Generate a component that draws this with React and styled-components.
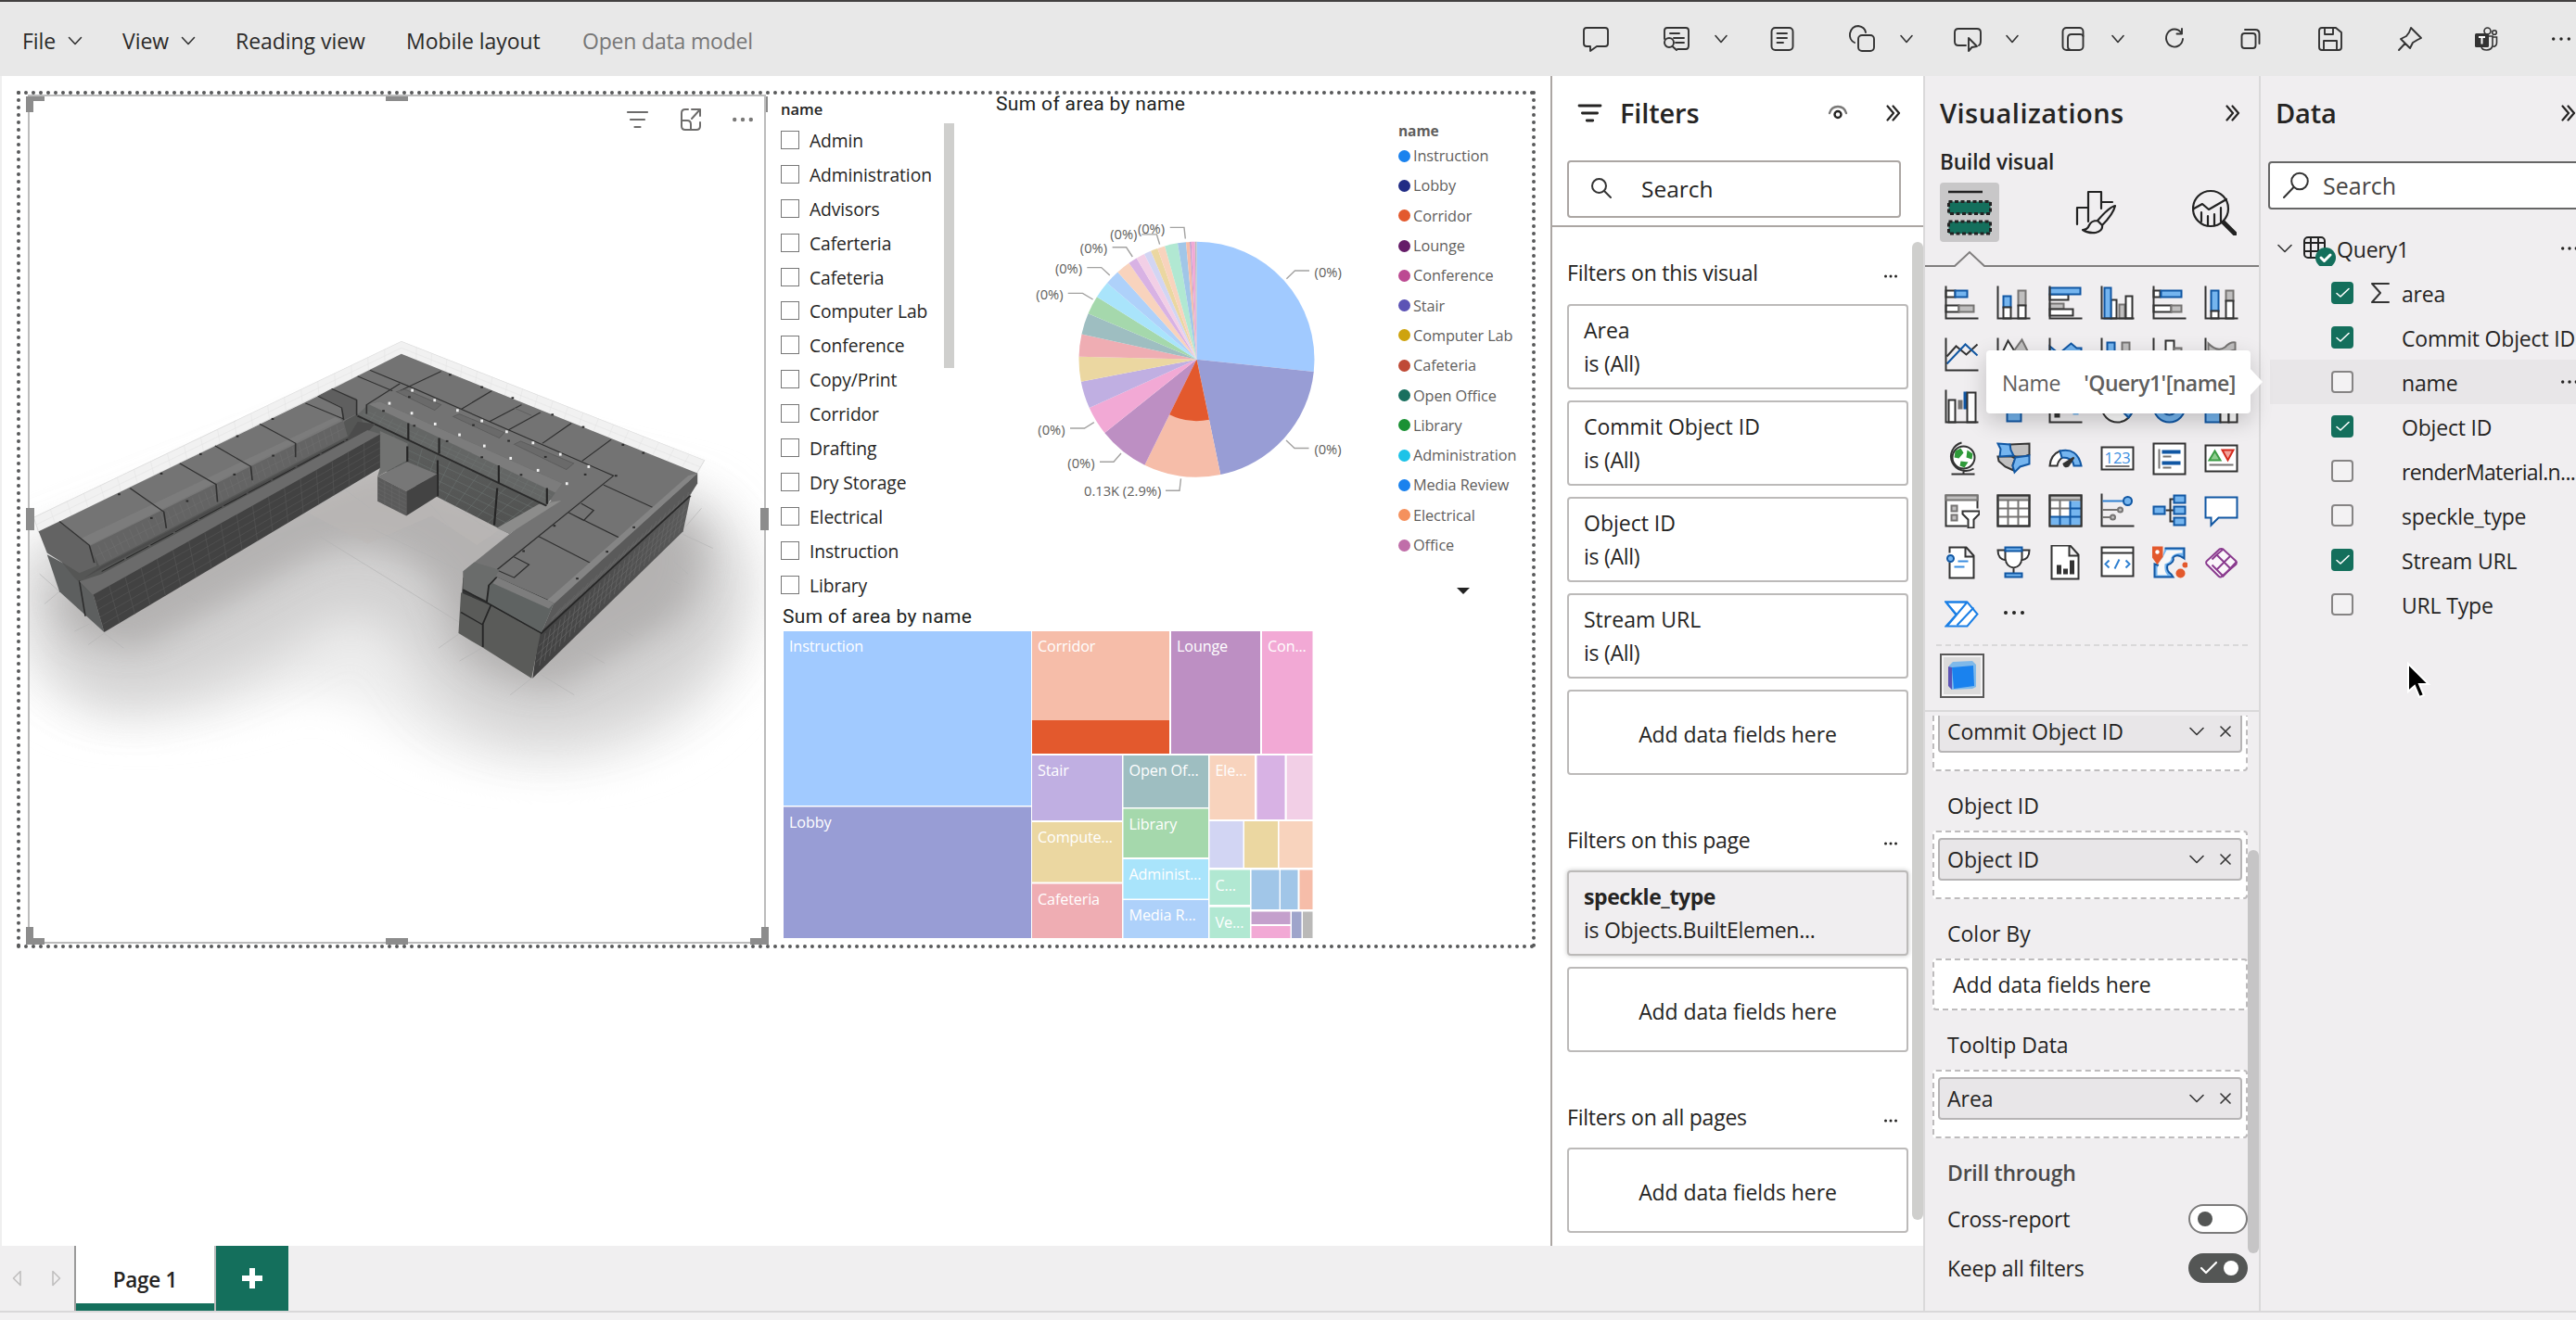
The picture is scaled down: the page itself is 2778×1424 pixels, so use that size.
import React from "react";
import styled, { createGlobalStyle, css } from "styled-components";

const FONT = `"Open Sans", "Noto Sans", sans-serif`;
const GREEN = "#146f5c";
const BLUE = "#75b5ef";
const NAVY = "#1157a3";
const GREY = "#c0bfbf";
const MID = "#767473";
const INK = "#333";

const Global = createGlobalStyle`
  * { box-sizing: border-box; }
  html, body { margin: 0; padding: 0; overflow: hidden; }
  body { background: #f0eff0; font-family: ${FONT}; font-size: 23px; color: #252423; }
  svg { display: block; flex: none; }
`;

/* ---------- shell ---------- */

const Shell = styled.div`
  position: relative;
  width: 2778px;
  height: 1424px;
  display: flex;
  flex-direction: column;
  overflow: hidden;
  border-top: 2px solid #434141;
`;
const Toolbar = styled.header`
  height: 80px;
  flex: none;
  display: flex;
  align-items: center;
  background: #e8e8e8;
  padding-left: 24px;
`;
const Menu = styled.nav`
  display: flex;
  align-items: center;
`;
const MenuItem = styled.div`
  width: ${(p) => p.$w}px;
  display: flex;
  align-items: center;
  gap: 13px;
  white-space: nowrap;
  color: ${(p) => (p.$muted ? "#777" : "#2b2a29")};
  letter-spacing: ${(p) => (p.$muted ? "-0.008em" : "-0.002em")};
  padding-top: 3px;
`;
const Tools = styled.div`
  margin-left: auto;
  display: flex;
  align-items: center;
`;
const Tool = styled.span`
  display: flex;
  justify-content: center;
  width: ${(p) => p.$w || 32}px;
  margin-left: ${(p) => p.$gap}px;
`;
const Body = styled.div`
  display: flex;
  height: 1332px;
  flex: none;
`;
const StatusEdge = styled.footer`
  height: 10px;
  border-top: 2px solid #d9d8d9;
  background: #f2f1f2;
`;
const Left = styled.div`
  width: 2074px;
  display: flex;
  flex-direction: column;
`;
const Stage = styled.div`
  height: 1262px;
  display: flex;
`;
const CanvasArea = styled.main`
  width: 1672px;
  background: #fff;
  border-left: 2px solid #efefef;
  padding: 16px 0 0 16px;
`;

/* ---------- report canvas ---------- */

const Report = styled.div`
  width: 1638px;
  height: 925px;
  border: 4px dotted #58595a;
  display: flex;
  padding-left: 8px;
`;
const ModelVisual = styled.section`
  position: relative;
  width: 796px;
  height: 916px;
  border: 2px solid #bcbcbc;
  padding-top: 236px;
`;
const VisualHeader = styled.div`
  position: absolute;
  top: 11px;
  right: 12px;
  display: flex;
  align-items: center;
  gap: 33px;
  height: 28px;
`;
const Handle = styled.i`
  position: absolute;
  background: #8c8c8c;
  width: ${(p) => p.$w}px;
  height: ${(p) => p.$h}px;
  left: ${(p) => p.$x}px;
  top: ${(p) => p.$y}px;
`;
const Charts = styled.div`
  flex: 1;
  display: flex;
  flex-direction: column;
`;
const ChartsTop = styled.div`
  height: 548px;
  display: flex;
`;
const Slicer = styled.section`
  width: 220px;
  padding-left: 16px;
`;
const SlicerTitle = styled.div`
  height: 31px;
  line-height: 32px;
  font-size: 16.5px;
  font-weight: 600;
`;
const SlicerBody = styled.div`
  display: flex;
`;
const SlicerList = styled.div`
  width: 176px;
`;
const SlicerRow = styled.div`
  height: 36.9px;
  display: flex;
  align-items: center;
  gap: 11px;
  font-size: 19.3px;
  letter-spacing: -0.005em;
  white-space: nowrap;
`;
const Box = styled.span`
  width: 20px;
  height: 20px;
  border: 1.5px solid #777;
  background: #fff;
  margin-top: -1px;
`;
const SlicerScroll = styled.div`
  width: 11px;
  height: 264px;
  background: #cfcfcd;
`;
const PieBlock = styled.section`
  width: 454px;
`;
const ChartTitle = styled.div`
  font-family: Roboto, sans-serif;
  font-weight: 400;
  font-size: 21px;
  letter-spacing: 0.35px;
  color: #201f1e;
  white-space: nowrap;
  height: ${(p) => p.$h}px;
  line-height: ${(p) => p.$h}px;
  padding-left: ${(p) => p.$pad}px;
`;
const Legend = styled.section`
  padding: 30px 0 0 8px;
  width: 150px;
  color: #5f5e5d;
  font-size: 16.3px;
  letter-spacing: -0.005em;
`;
const LegendTitle = styled.div`
  height: 20px;
  line-height: 19px;
  font-weight: 700;
  font-size: 15.5px;
`;
const LegendRow = styled.div`
  height: 32.3px;
  display: flex;
  align-items: center;
  gap: 3px;
  white-space: nowrap;
`;
const Dot = styled.span`
  width: 13px;
  height: 13px;
  border-radius: 50%;
  background: ${(p) => p.$c};
`;
const MoreArrow = styled.div`
  width: 0;
  margin: 30px 0 0 63px;
  border: 7px solid transparent;
  border-top: 7px solid #222;
  border-bottom: 0;
`;

/* ---------- page tabs ---------- */

const PageBar = styled.div`
  height: 70px;
  display: flex;
  background: #f0eff0;
`;
const PageArrows = styled.div`
  width: 80px;
  padding-left: 13px;
  display: flex;
  align-items: center;
  gap: 33px;
`;
const PageTab = styled.div`
  width: 153px;
  border-left: 2px solid #9b9b9b;
  border-right: 2px solid #b9b9b9;
  background: linear-gradient(${GREEN}, ${GREEN}) bottom / 100% 8px no-repeat #fff;
  line-height: 73px;
  text-align: center;
  font-weight: 600;
  font-size: 22.5px;
  letter-spacing: -0.012em;
`;
const AddPage = styled.div`
  width: 78px;
  background: ${GREEN};
  display: flex;
  align-items: center;
  justify-content: center;
`;

/* ---------- shared pane parts ---------- */

const PaneHead = styled.div`
  display: flex;
  align-items: center;
  height: 80px;
  padding-left: ${(p) => p.$pad}px;
  padding-right: ${(p) => p.$right}px;
`;
const PaneTitle = styled.h2`
  margin: -2px 0 0;
  font-size: 29px;
  line-height: 1;
  font-weight: 600;
  letter-spacing: ${(p) => p.$ls || "-0.005em"};
`;
const Spacer = styled.span`
  flex: ${(p) => (p.$w ? `0 0 ${p.$w}px` : 1)};
`;
const SearchBox = styled.div`
  display: flex;
  align-items: center;
  background: #fff;
  border-radius: 4px;
`;

/* ---------- filters ---------- */

const FiltersPane = styled.aside`
  width: 402px;
  border-left: 2px solid #aba6a3;
  background: #fff;
  display: flex;
  flex-direction: column;
`;
const FilterSearch = styled(SearchBox)`
  width: 360px;
  height: 62px;
  margin: 11px 0 8px 16px;
  border: 2px solid #aba6a3;
  padding: 0 0 2px 23px;
  gap: 31px;
  flex: none;
  font-size: 24.5px;
`;
const FilterScroll = styled.div`
  border-top: 2px solid #aba6a3;
  flex: 1;
  display: flex;
`;
const FilterList = styled.div`
  width: 384px;
  margin-left: 4px;
  padding-left: 12px;
`;
const FilterGroup = styled.section`
  display: flex;
  flex-direction: column;
  gap: 12px;
  padding-top: ${(p) => p.$top}px;
  width: 368px;
`;
const GroupTitle = styled.div`
  display: flex;
  justify-content: space-between;
  align-items: center;
  height: 40px;
  margin-bottom: ${(p) => p.$mb}px;
  padding-right: 12px;
  line-height: 40px;
  white-space: nowrap;
  letter-spacing: -0.01em;
  svg { margin-top: 8px; }
`;
const FilterCard = styled.div`
  height: 92px;
  border: 2px solid #bcbab9;
  border-radius: 4px;
  padding: 8px 16px;
  line-height: 36px;
  white-space: nowrap;
  ${(p) =>
    p.$active &&
    css`
      background: #f0eef0;
      box-shadow: 0 0 5px rgba(0, 0, 0, 0.25);
    `}
  ${(p) =>
    p.$empty &&
    css`
      text-align: center;
      padding-top: 28px;
      letter-spacing: -0.003em;
    `}
`;
const CardName = styled.div`
  font-weight: ${(p) => (p.$bold ? 700 : 400)};
  letter-spacing: ${(p) => (p.$bold ? "-0.018em" : "0")};
`;
const CardRule = styled.div`
  letter-spacing: -0.012em;
`;
const Thumb = styled.div`
  width: 12px;
  height: ${(p) => p.$h}px;
  border-radius: 6px;
  background: ${(p) => p.$c};
  margin-top: ${(p) => p.$top}px;
`;

/* ---------- visualizations ---------- */

const VizPane = styled.aside`
  width: 362px;
  border-left: 2px solid #dad9da;
  background: #f0eef0;
  display: flex;
  flex-direction: column;
`;
const BuildLabel = styled.div`
  height: 35px;
  line-height: 25px;
  padding-left: 16px;
  font-weight: 600;
  font-size: 22.5px;
  letter-spacing: -0.004em;
`;
const ModeRow = styled.div`
  display: flex;
  align-items: center;
  justify-content: space-between;
  height: 64px;
  padding: 0 24px 0 16px;
`;
const ModeButton = styled.span`
  width: ${(p) => (p.$on ? 64 : 48)}px;
  height: 64px;
  border-radius: 4px;
  background: ${(p) => (p.$on ? "#c8c7c8" : "transparent")};
  display: flex;
  align-items: center;
  justify-content: center;
`;
const VizGrid = styled.div`
  display: grid;
  grid-template-columns: repeat(6, 56px);
  grid-auto-rows: 56px;
  margin: 11px 12px 0;
  height: 396px;
  place-items: center;
`;
const GridDots = styled.span`
  margin-top: -5px;
`;
const DashLine = styled.div`
  height: 2px;
  margin: 0 12px;
  background: repeating-linear-gradient(90deg, #d9d8d9 0 6px, transparent 6px 10px);
`;
const CustomVisual = styled.div`
  width: 48px;
  height: 48px;
  margin: 8px 0 13px 16px;
  border: 2px solid #5a5959;
  padding: 2px;
  background: #f4f3f4;
`;
const FieldScroll = styled.div`
  border-top: 2px solid #d9d8d9;
  flex: 1;
  display: flex;
`;
const Fields = styled.div`
  width: 348px;
  margin-top: 4px;
  padding-left: 8px;
  overflow: hidden;
`;
const Well = styled.div`
  height: ${(p) => p.$h || 74}px;
  margin-top: ${(p) => p.$mt || 0}px;
  border: 2px dashed #bebcbd;
  border-radius: 4px;
  background: #fff;
  padding: ${(p) => (p.$empty ? "0 20px" : "6px 4px")};
  line-height: 53px;
  letter-spacing: ${(p) => (p.$empty ? "-0.003em" : "0")};
`;
const Pill = styled.div`
  height: 46px;
  border: 2px solid #b6b4b5;
  border-radius: 4px;
  background: #e8e6e8;
  display: flex;
  align-items: center;
  line-height: 42px;
  padding: 0 10px 0 8px;
  gap: 17px;
`;
const FieldLabel = styled.div`
  height: ${(p) => p.$h}px;
  line-height: ${(p) => p.$lh}px;
  padding-left: 16px;
  font-weight: ${(p) => (p.$strong ? 600 : 400)};
  letter-spacing: ${(p) => (p.$strong ? "-0.01em" : "0")};
  color: ${(p) => (p.$strong ? "#4a4949" : "inherit")};
`;
const SwitchRow = styled.div`
  height: ${(p) => p.$h}px;
  display: flex;
  align-items: center;
  justify-content: space-between;
  padding-left: 16px;
  letter-spacing: -0.01em;
`;
const Switch = styled.span`
  width: 64px;
  height: 32px;
  border-radius: 16px;
  border: 2px solid ${(p) => (p.$on ? "#545655" : "#7c7b7b")};
  background: ${(p) => (p.$on ? "#545655" : "#fff")};
  display: flex;
  align-items: center;
  justify-content: ${(p) => (p.$on ? "flex-end" : "flex-start")};
  gap: 6px;
  padding: 0 8px;
  &::after {
    content: "";
    width: 16px;
    height: 16px;
    border-radius: 50%;
    background: ${(p) => (p.$on ? "#fff" : "#545655")};
  }
`;

/* ---------- data ---------- */

const DataPane = styled.aside`
  width: 342px;
  border-left: 2px solid #dad9da;
  background: #f0eef0;
  overflow: hidden;
`;
const DataSearch = styled(SearchBox)`
  width: 350px;
  height: 52px;
  margin: 12px 0 18px 8px;
  border: 2px solid #666;
  padding-left: 13px;
  gap: 14px;
  color: #484644;
  font-size: 25px;
`;
const TreeRow = styled.div`
  height: 48px;
  width: 332px;
  margin-left: 10px;
  display: flex;
  align-items: center;
  white-space: nowrap;
  background: ${(p) => (p.$hover ? "#e8e6e8" : "transparent")};
  padding-left: ${(p) => (p.$root ? 8 : 66)}px;
  line-height: 50px;
`;
const Check = styled.span`
  width: 24px;
  height: 24px;
  flex: none;
  border-radius: 4px;
  border: 2px solid ${(p) => (p.$on ? GREEN : "#868484")};
  background: ${(p) => (p.$on ? GREEN : "#f3f2f3")};
`;
const Glyph = styled.span`
  width: 52px;
  flex: none;
  padding-left: 19px;
`;
const FieldName = styled.span`
  flex: none;
  padding-top: 2px;
  letter-spacing: ${(p) => (p.$tight ? "-0.028em" : "-0.008em")};
`;

/* ---------- floating items ---------- */

const Tooltip = styled.div`
  position: absolute;
  left: 2142px;
  top: 376px;
  width: 285px;
  height: 68px;
  border-radius: 4px;
  background: #fff;
  color: #5f5e5d;
  box-shadow: 0 8px 24px rgba(0, 0, 0, 0.2);
  display: flex;
  align-items: center;
  gap: 25px;
  padding: 2px 0 0 17px;
  white-space: nowrap;
  letter-spacing: -0.012em;
  &::after {
    content: "";
    position: absolute;
    left: 100%;
    top: 20px;
    border: 14px solid transparent;
    border-left: 13px solid #fff;
    border-right: 0;
  }
  b {
    font-weight: 600;
    letter-spacing: -0.022em;
  }
`;
const Pointer = styled.div`
  position: absolute;
  left: 2595px;
  top: 711px;
`;

/* ---------- icons ---------- */

const Svg = ({ w = 32, h = 32, sw = 2, c = INK, children }) => (
  <svg width={w} height={h} viewBox={`0 0 ${w} ${h}`} fill="none" stroke={c} strokeWidth={sw} strokeLinejoin="round" strokeLinecap="round">
    {children}
  </svg>
);
const Chevron = ({ w = 14, c = INK, sw = 1.6 }) => (
  <Svg w={16} h={10} c={c} sw={sw}>
    <path d={`M${8 - w / 2} 1.5L8 8.5L${8 + w / 2} 1.5`} />
  </Svg>
);
const DoubleChevron = () => (
  <Svg w={16} h={18} sw={2.2} c="#252423">
    <path d="M1.5 1.5L8 9L1.5 16.5M7.500 1.500L14 9L7.500 16.500" />
  </Svg>
);
const Dots = ({ w = 20, r = 1.7, c = "#252423" }) => (
  <svg width={w} height={6} viewBox={`0 0 ${w} 6`} fill={c}>
    <circle cx={r} cy={3} r={r} />
    <circle cx={w / 2} cy={3} r={r} />
    <circle cx={w - r} cy={3} r={r} />
  </svg>
);
const Cross = () => (
  <Svg w={12} h={12} sw={1.6}>
    <path d="M1 1L11 11M11 1L1 11" />
  </Svg>
);
const FunnelLines = ({ c = "#252423", w = 26, sw = 2.8 }) => (
  <Svg w={w} h={20} c={c} sw={sw}>
    <path d={`M2 2H${w - 2}M${w * 0.2} 10H${w * 0.8}M${w * 0.38} 18H${w * 0.62}`} />
  </Svg>
);

const tools = [
  [0, <><path d="M6 4H26Q29 4 29 7V21Q29 24 26 24H17L10 29V24H6Q3 24 3 21V7Q3 4 6 4Z" /></>],
  [55, <><path d="M3 16V7Q3 4 6 4H26Q29 4 29 7V23Q29 27 26 27H17M9 10H19M13 15H24M15 20H24" /><circle cx="8" cy="20" r="5" /><path d="M11.500 24L16 28" /></>],
  [24, "chev"],
  [42, <><rect x="4.500" y="4" width="23" height="24" rx="4" /><path d="M10.500 10H21M10.500 15H21M10.500 20H17" /></>],
  [54, <><path d="M8 20Q2 17 3 10Q5 2 12 2Q19 3 20 9" /><rect x="12" y="12" width="17" height="17" rx="4" /></>],
  [24, "chev"],
  [42, <><path d="M14 23H6Q2 23 2 19V9Q2 5 6 5H26Q30 5 30 9V18Q30 22 28 23" /><path d="M17 15V29L20.500 25L26 24Z" /></>],
  [24, "chev"],
  [42, <><rect x="4.500" y="4" width="22" height="24" rx="4" /><path d="M26.500 13Q26 11 23 11H14Q10 11 10 15V24Q10 27.500 13 28" /></>],
  [24, "chev"],
  [37, <><path d="M23 9A9 9.500 0 1 0 25 16M24 5V10.500H18.500" /></>],
  [50, <><rect x="6.500" y="10" width="15" height="16" rx="3" /><path d="M10 6H21Q25.500 6 25.500 10.500V21" /></>],
  [54, <><path d="M7 4H22L28 9V25Q28 28 25 28H7Q4 28 4 25V7Q4 4 7 4ZM9 28V18H23V28M10 4V11H19V4" /></>],
  [54, <><path d="M17 4L28 15L24 17L19 20L16 26L6 16L12 13L15 9ZM10.500 21L4 28" /></>],
  [50, "teams"],
  [49, "dots"],
];

const ToolIcons = () => (
  <Tools>
    {tools.map(([gap, art], i) => (
      <Tool key={i} $gap={gap} $w={art === "chev" ? 16 : 32}>
        {art === "chev" && <Chevron w={12} />}
        {art === "dots" && <Dots w={20} />}
        {art === "teams" && (
          <svg width="32" height="32" viewBox="0 0 32 32">
            <g fill="none" stroke={INK} strokeWidth="1.600">
              <circle cx="17.500" cy="7.500" r="3.500" />
              <circle cx="25" cy="9" r="2.300" />
              <path d="M18 13H23V23Q22 28 16.500 28Q12 28 11 25M23 14H27.500V20Q27.500 24 23.500 24.500" />
            </g>
            <rect x="4" y="10" width="15" height="15" rx="1.500" fill={INK} />
            <path d="M8 14H15M11.500 14V21.500" stroke="#fff" strokeWidth="2" />
          </svg>
        )}
        {typeof art !== "string" && <Svg sw={1.9}>{art}</Svg>}
      </Tool>
    ))}
  </Tools>
);

/* bar pieces of the visual gallery */
const B = (x, y, w, h) => <rect key={`b${x}-${y}`} x={x} y={y} width={w} height={h} fill={BLUE} stroke={NAVY} />;
const G = (x, y, w, h) => <rect key={`g${x}-${y}`} x={x} y={y} width={w} height={h} fill={GREY} stroke={MID} />;
const W = (x, y, w, h) => <rect key={`w${x}-${y}`} x={x} y={y} width={w} height={h} fill="#fff" stroke={INK} />;
const axis = <path key="axis" d="M1 0V35H36" />;

const gallery = [
  [W(1, 5, 10, 7), B(11, 5, 13, 7), W(1, 21, 14, 7), G(15, 21, 16, 7), axis],
  [B(7, 11, 8, 12), W(7, 23, 8, 12), G(23, 5, 8, 16), W(23, 21, 8, 14), axis],
  [W(1, 9, 20, 6), G(1, 19, 15, 6), W(1, 25, 25, 7), B(1, 2, 33, 7), axis],
  [W(11, 15, 6, 20), G(20, 20, 6, 15), W(27, 11, 7, 24), B(4, 2, 7, 33), axis],
  [W(1, 5, 7, 7), B(9, 5, 22, 7), W(1, 21, 19, 7), G(20, 21, 11, 7), axis],
  [B(7, 5, 8, 22), W(7, 27, 8, 8), G(23, 5, 8, 11), W(23, 16, 8, 19), axis],
  [<path key="a" d="M2 20L12 9L23 18L35 7" />, <path key="b" d="M2 28L22 7L35 19" stroke={NAVY} />, axis],
  [<path key="a" d="M4 20L12 3L20 16" fill="#fff" />, <path key="b" d="M14 20L27 2L36 20Z" fill={GREY} stroke={MID} />, axis],
  [<path key="a" d="M1 9L11 17L24 6L30 11H35V34H1Z" fill={BLUE} stroke={NAVY} />, axis],
  [B(7, 5, 8, 14), G(23, 5, 8, 12), axis],
  [W(14, 3, 9, 31), G(23, 11, 8, 22), axis],
  [<path key="a" d="M4 6Q14 16 22 10Q28 4 33 5V13Q26 14 20 19Q10 20 4 14Z" fill={GREY} stroke={MID} />, axis],
  [W(4, 11, 7, 24), <rect key="g" x="14" y="11" width="5" height="10" fill={MID} stroke="none" />, <rect key="n" x="20" y="2" width="4" height="19" fill={NAVY} stroke="none" />, W(24, 3, 9, 32), axis],
  [B(11, 22, 15, 12), B(5, 12, 26, 10)],
  [<rect key="a" x="6" y="21" width="6" height="9" fill={INK} stroke="none" />, <rect key="b" x="26" y="18" width="6" height="9" fill={BLUE} stroke="none" />, axis],
  [<circle key="a" cx="18" cy="18" r="17" fill="#fff" />, <path key="b" d="M18 18V1A17 17 0 0 1 30 30Z" fill={BLUE} stroke={NAVY} />],
  [<circle key="a" cx="18" cy="18" r="13" stroke={BLUE} strokeWidth="8" />, <circle key="b" cx="18" cy="18" r="17" stroke={NAVY} />, <circle key="c" cx="18" cy="18" r="9" stroke={NAVY} />],
  [B(1, 2, 16, 33), W(17, 2, 18, 17), W(17, 19, 9, 16), W(26, 19, 9, 16)],
  [
    <circle key="a" cx="20" cy="17" r="12" fill="#fff" />,
    <path key="b" d="M11 10L17 7L20 12L15 18L10 17ZM24 9L30 13L29 19L23 17ZM17 21L25 22L21 28L16 26Z" fill="#2f9a3a" stroke="none" />,
    <path key="c" d="M18 1A16 15.500 0 1 0 31 29M20 30V34M7 35H32" />,
  ],
  [
    <path key="a" d="M14 3L35 2V14L30 16H20L15 14Z" fill={GREY} stroke={INK} />,
    <path key="b" d="M1 16L16 16L20 18L17 25L18 31L9 27L2 21Z" fill={GREY} stroke={INK} />,
    <path key="c" d="M1 2L14 3L15 9L18 15L3 16L4 8Z" fill={BLUE} stroke={NAVY} />,
    <path key="d" d="M20 17L35 15V24L25 27L19 33L17 26Z" fill={BLUE} stroke={NAVY} />,
  ],
  [
    <path key="a" d="M1 26Q2 14 12 10L15 17Q10 20 9 26Z" fill="#fff" />,
    <path key="b" d="M12 10Q31 6 35 26H27Q26 17 14 17Z" fill={BLUE} stroke={NAVY} />,
    <path key="c" d="M27 17L16 24Q17 28 21 26Z" fill={INK} />,
  ],
  [
    W(1, 6, 34, 24),
    <text key="t" x="4" y="23" fontSize="16.500" fill="#3b8ee0" stroke="none" fontFamily={FONT}>123</text>,
    <path key="l" d="M5 26.500H31" stroke={MID} />,
  ],
  [W(1, 2, 34, 33), <path key="a" d="M7 8V29M11 16H20M11 28H20" stroke={MID} />, <path key="b" d="M10 11H30M10 23H30" stroke={NAVY} strokeWidth="4" strokeLinecap="butt" />],
  [
    W(1, 4, 34, 28),
    <path key="a" d="M5 20L11 10L17 20Z" fill="#8fce8f" stroke="#3c9c44" />,
    <path key="b" d="M19 9H31L25 20Z" fill="#f2a39b" stroke="#d52b1e" />,
    <path key="c" d="M5 25H31" stroke={MID} />,
  ],
  [
    <path key="a" d="M35 16V2H1V35H24" fill="#fff" />,
    G(1, 2, 34, 5),
    G(7, 13, 6, 6),
    G(7, 23, 6, 6),
    <path key="b" d="M19 19H37V22L31 28V37H25V28L19 22Z" fill="#fff" />,
  ],
  [W(1, 2, 34, 33), G(1, 2, 34, 5), <path key="a" d="M12 7V34M23 7V34M1 16H35M1 25H35" stroke={MID} />, <rect key="o" x="1" y="2" width="34" height="33" />],
  [
    W(1, 2, 34, 33),
    G(1, 2, 34, 5),
    <path key="b" d="M23 8H35V34H1V25H23Z" fill={BLUE} stroke="none" />,
    <path key="a" d="M12 7V25M1 16H23" stroke={MID} />,
    <path key="c" d="M23 8V34M12 25V34M1 25H35M23 16H35" stroke={NAVY} />,
    <rect key="o" x="1" y="2" width="34" height="33" />,
  ],
  [
    axis,
    <path key="a" d="M2 8H25" stroke="#2f80d1" />,
    <circle key="b" cx="29" cy="8" r="4.500" fill={BLUE} stroke={NAVY} />,
    <path key="c" d="M2 17.500H19M2 25.500H10" stroke={MID} />,
    <circle key="d" cx="21" cy="17.500" r="2.500" fill={GREY} stroke={MID} />,
    <circle key="e" cx="13" cy="25.500" r="2.500" fill={GREY} stroke={MID} />,
  ],
  [<path key="a" d="M14 18H23M23 6H19V30H23M19 18H23" />, B(1, 14, 12, 8), B(23, 2, 12, 8), B(23, 14, 12, 8), B(23, 26, 12, 8)],
  [<path key="a" d="M1 4H35V26H15L7 34V26H1Z" fill="#fff" stroke={NAVY} />],
  [
    <path key="a" d="M5 8V2H23L31 11V35H5V18M22 2V12H31" fill="#fff" />,
    <circle key="b" cx="6" cy="14" r="3.500" fill={BLUE} stroke={NAVY} />,
    <path key="c" d="M14 17H25M10 23H21" stroke="#3b8ee0" />,
  ],
  [
    <path key="a" d="M9 5H27V14Q26 23 18 24Q10 23 9 14ZM9 5H1Q1 15 10 16M27 5H35Q35 15 26 16M18 24V30" fill="#fff" />,
    B(9, 2, 18, 4),
    B(9, 30, 18, 4),
  ],
  [
    <path key="a" d="M3 0H23L32 10V36H3ZM22 1V11H31" fill="#fff" />,
    <path key="b" d="M11 31V21M18 31V25M25 31V16" strokeWidth="5" strokeLinecap="butt" />,
  ],
  [W(1, 2, 34, 31), <path key="a" d="M1 8H35" />, <path key="b" d="M9 16L5 20L9 24M20 15L15 25M27 16L31 20L27 24" stroke="#2f80d1" />],
  [
    <path key="a" d="M13 3H34V14Q26 8 22 13Q24 18 16 21Q14 27 20 31L22 34H2V20L8 22" fill={BLUE} stroke={NAVY} />,
    <path key="b" d="M15 5H32V8Q22 8 20 13Q20 18 13 20Q12 28 16 32H5V24Z" fill="#f8f8f8" stroke="none" />,
    <path key="c" d="M0 2H10V12L5 19L0 12Z" fill="#e3592d" stroke="#e3592d" />,
    <circle key="d" cx="5" cy="7" r="2.200" fill="#fff" stroke="none" />,
    <circle key="e" cx="30" cy="30" r="5" fill="#e3592d" stroke="none" />,
    <circle key="f" cx="35" cy="21" r="3" fill="#e3592d" stroke="none" />,
  ],
  [
    <path key="a" d="M16 4L2 17Q1 19 2 20L15 33Q17 35 19 33L34 20Q35 18 34 17L20 4Q18 3 16 4Z" fill="#faf6fa" stroke="#8a3a8e" />,
    <path key="b" d="M20 4L13 10L28 25M13 10L8 15M34 18L20 33L13 26L28 11M13 26L8 21" stroke="#8a3a8e" />,
  ],
  [
    <path key="a" d="M1 5H24L35 18L24 31H1L12 19Z" fill="#fff" stroke="#1b7fe5" />,
    <path key="b" d="M24 5L3 30M31 11L13 30M24 5L1 5L12 18" stroke="#1b7fe5" />,
  ],
];

/* ---------- 3D model ---------- */

const lerp = (a, b, t) => [a[0] + (b[0] - a[0]) * t, a[1] + (b[1] - a[1]) * t];
/* grid lines across a quad given by its four corners */
const quadGrid = (p0, p1, p2, p3, nu, nv) => {
  let d = "";
  for (let i = 1; i < nu; i++) {
    const a = lerp(p0, p1, i / nu);
    const b = lerp(p3, p2, i / nu);
    d += `M${a}L${b}`;
  }
  for (let j = 1; j < nv; j++) {
    const a = lerp(p0, p3, j / nv);
    const b = lerp(p1, p2, j / nv);
    d += `M${a}L${b}`;
  }
  return d;
};
const studs = [[830, 243], [875, 275], [921, 308], [970, 342], [1020, 377], [1073, 413], [1128, 450], [1185, 490], [784, 285], [829, 317], [876, 352], [925, 387], [975, 423], [1028, 463], [1083, 502], [1141, 545]];
const pins = [[325, 513], [240, 580], [404, 450], [478, 392], [549, 336], [305, 657], [377, 602], [472, 516], [550, 455], [906, 193], [970, 233], [1032, 268], [1112, 322], [1174, 362], [1254, 420], [1295, 446], [1276, 687], [1222, 766], [1162, 853], [1116, 682], [1054, 764], [953, 356], [1024, 407], [1098, 459], [1178, 516], [772, 310], [834, 358], [900, 408], [970, 460], [1049, 517], [1240, 520], [824, 265]];

const BuildingModel = () => (
  <svg width="792" height="533" viewBox="60 0 1478 1600" preserveAspectRatio="none">
    <defs>
      <filter id="halo" x="-30%" y="-30%" width="160%" height="170%">
        <feGaussianBlur stdDeviation="50 60" />
      </filter>
      <filter id="far" x="-30%" y="-30%" width="160%" height="170%">
        <feGaussianBlur stdDeviation="55 80" />
      </filter>
      <filter id="near" x="-30%" y="-30%" width="160%" height="160%">
        <feGaussianBlur stdDeviation="36 48" />
      </filter>
      <linearGradient id="lowWall" x1="0" x2="0" y1="0" y2="1">
        <stop offset="0" stopColor="#5f6160" />
        <stop offset="1" stopColor="#505150" />
      </linearGradient>
      <linearGradient id="sideWall" x1="1" x2="0" y1="0" y2="1">
        <stop offset="0" stopColor="#5c5c5c" />
        <stop offset="1" stopColor="#3f3f3f" />
      </linearGradient>
    </defs>
    <path d="M40 760L760 320L1410 560Q1560 760 1500 1080Q1420 1420 1150 1480Q930 1490 800 1330Q690 1190 560 1240Q360 1360 200 1320Q60 1260 40 1000Z" fill="#eeeeee" filter="url(#halo)" />
    <path d="M60 780L760 330L1390 600Q1540 760 1460 1050Q1360 1340 1090 1370Q900 1340 840 1130Q740 880 640 1020Q430 1240 240 1260Q80 1200 60 940Z" fill="#c4c3c3" opacity=".68" filter="url(#far)" />
    <path d="M110 900L760 480L1060 640L1390 660Q1450 840 1350 1000L1120 1210Q990 1200 920 1070L880 870Q780 690 640 770L280 1080L160 1050Z" fill="#a8a6a5" opacity=".7" filter="url(#near)" />
    <path d="M620 640L765 500L1010 690L960 745L870 650L740 740Z" fill="#bdb9b5" opacity=".45" />
    <path d="M645 718L940 1010M750 692L930 830M865 610L915 705M690 560L745 625M880 585L990 700M80 838L120 895L90 935M150 1024L180 1000M210 1030L178 1067M210 1030L249 1078M923 1033L883 1078M970 1078L925 1120M1070 1176L1027 1230M1090 1165L1156 1230M1150 1065L1217 1127M1220 985L1275 1040M1300 905L1320 945M1335 840L1368 872M1355 795L1385 838M1375 710L1435 755M1380 685L1412 625M375 905L398 930" stroke="#b3b3b3" strokeWidth="1.500" fill="none" />

    <path d="M808 85L1418 470L1402 514L808 127L78 702L68 655Z" fill="#f1f1f1" stroke="#dcdcdc" strokeWidth="2" />
    <path d={quadGrid([68, 655], [808, 85], [808, 127], [78, 702], 22, 2) + quadGrid([808, 85], [1418, 470], [1402, 514], [808, 127], 20, 2)} stroke="#dfdfdf" fill="none" />

    <path d="M95 775L165 835L188 905L210 1027L120 895Z" fill="#5d5f5f" />
    <path d="M120 790L640 330L740 270L800 330L768 495L700 450L188 908L150 850Z" fill="#555655" />
    <path d="M160 860L172 975" stroke="#2c2c2c" strokeWidth="3" />
    <path d="M640 262L808 125L1404 512L1115 935L932 830L1110 600L720 320L690 345Z" fill="#737373" />
    <path d="M725 325L1105 610L1025 708L880 588L765 495Z" fill="url(#lowWall)" />
    <path d={quadGrid([765, 370], [1105, 618], [1025, 708], [765, 495], 12, 5)} stroke="#6f7573" fill="none" strokeWidth="1.200" />
    <path d="M765 375L820 415V470L760 522L765 495Z" fill="#727372" />
    <path d="M1000 690L1085 612L1130 600L1025 708Z" fill="#8c8c8b" />
    <path d="M720 322L742 288L765 280L1132 545L1118 575L1100 617Z" fill="#646665" />
    <path d="M742 288L765 280L1132 545L1118 575Z" fill="#7c7c7c" />
    <path d={quadGrid([740, 300], [1115, 570], [1100, 612], [728, 330], 22, 3)} stroke="#727877" fill="none" />
    <path d="M720 326L1100 617" stroke="#2a2a2a" strokeWidth="5" />
    <path d="M822 350V405M884 398V448M1004 486V545M1101 560V612M820 425V475M881 470V586M1001 560L995 680" stroke="#252525" strokeWidth="4" />

    <path d="M78 700L120 668L185 745L195 812L160 835L95 770Z" fill="#636363" />
    <path d="M120 668L640 262L708 318L690 350L180 745Z" fill="#747474" />
    <path d="M180 745L690 335L700 392L200 812Z" fill="#646464" />
    <path d="M165 722L675 330L690 342L180 748Z" fill="#808080" opacity=".7" />
    <path d="M205 812L700 398L720 345L755 352L740 380L170 850Z" fill="#4b4b4b" />
    <path d="M160 862L205 838L740 372L768 386L188 908Z" fill="#6b6b6b" />
    <path d="M188 905L765 386V495L210 1027Z" fill="#424242" />
    <path d={quadGrid([188, 905], [765, 386], [765, 495], [210, 1027], 18, 5)} stroke="#5a5a5a" fill="none" strokeWidth="1.300" />
    <path d={quadGrid([185, 755], [690, 345], [696, 388], [200, 806], 40, 2)} stroke="#737373" fill="none" />
    <path d="M205 830L700 402" stroke="#262626" strokeWidth="2.500" strokeDasharray="60 5" />
    <path d="M640 262L690 300V342L718 320V270L668 238Z" fill="#5f5f5f" />
    <path d="M120 668L180 745L190 802M262 560L330 637L335 690M362 480L435 548L438 605M433 423L505 490L508 535M523 352L595 415V460M615 285L690 335M640 262L688 300L692 340M668 238L718 275V325M720 198L790 245M745 178L830 235L1235 520L1000 825M805 222L738 290V320M888 182L805 245M990 245L928 305M1050 290L985 345M1088 315L1020 375M1150 350L1092 415M1230 403L1172 472M1215 550L1320 627M1145 640L1252 725M1085 717L1195 808M1000 850L1115 932M1170 610L1195 632L1175 665L1148 642M1035 783L1065 808L1035 850L1000 825" stroke="#303030" strokeWidth="3" fill="none" />
    <path d="M1035 300L1070 325M798 248L815 240L888 290L875 308ZM912 328L925 320L1015 380L1005 398ZM1035 418L1048 408L1155 480L1140 500Z" stroke="#5a5a5a" fill="#6a6a6a" strokeWidth="2" />

    <path d="M760 522L820 475L880 515L818 570Z" fill="#777" />
    <path d="M760 522L818 570V650L760 603Z" fill="#5b5b5b" />
    <path d="M818 570L880 515V587L818 650Z" fill="#434343" />
    <path d={quadGrid([760, 522], [818, 570], [818, 650], [760, 603], 4, 6)} stroke="#6c6c6c" fill="none" />

    <path d="M1404 512V545L1388 585L1090 1028L1115 932Z" fill="#5a5a5a" />
    <path d="M1404 512L1385 520L1100 925L1115 935Z" fill="#858585" />
    <path d="M1390 585L1375 700L1072 1176L1085 1030Z" fill="url(#sideWall)" />
    <path d={quadGrid([1395, 560], [1120, 960], [1100, 1005], [1390, 590], 30, 2) + quadGrid([1388, 600], [1088, 1045], [1076, 1150], [1376, 690], 30, 4)} stroke="#6d6d6d" fill="none" strokeWidth="1.300" />
    <path d="M1390 584L1088 1032" stroke="#262626" strokeWidth="4" />
    <path d="M932 850L1000 850L1100 940L1088 1036L988 950L930 905Z" fill="#333434" />
    <path d="M932 830L955 800L1005 825L990 870L984 928L932 888Z" fill="#6a6c6b" />
    <path d="M985 872L1000 848L1115 932L1090 1028L982 930Z" fill="#5f6362" />
    <path d="M1000 848L1115 932L1105 950L992 868Z" fill="#7d7d7d" />
    <path d="M928 898L988 940L1088 1030L1070 1176L970 1075L923 1030Z" fill="#5a5b59" />
    <path d="M1000 848L984 875L980 928M988 940L972 1000V1075M928 962L972 1003M932 888L1090 1030" stroke="#262626" strokeWidth="3.500" fill="none" />
    {studs.map(([x, y]) => (
      <rect key={`${x}-${y}`} x={x - 2.500} y={y - 4} width="5" height="9" fill="#f3f3f3" />
    ))}
    {pins.map(([x, y]) => (
      <rect key={`${x}-${y}`} x={x - 2.500} y={y - 3} width="5" height="6" fill="#2b2b2b" />
    ))}
  </svg>
);

/* ---------- charts ---------- */

const slices = [
  [96, "#a1caff"], [168.3, "#989dd5"], [206.2, "#f6bda9"], [231.4, "#bd8fc3"], [245.7, "#f2a9d5"], [259.1, "#c0afe2"],
  [271.3, "#ebd7a1"], [282.4, "#efadb3"], [292.9, "#9ebec1"], [302.1, "#a5d8ac"], [310.5, "#a9e4fb"], [317.9, "#aed1fa"],
  [324.9, "#f8d3bd"], [329.3, "#d8b2e4"], [333.6, "#f2cfe6"], [337.1, "#d2d5f3"], [340.6, "#ebd7a1"], [344.3, "#f8d3bd"],
  [350.7, "#b1e8d2"], [354.8, "#a1c6e8"], [356.6, "#f6bda9"], [357.4, "#c4a0cc"], [359.2, "#f2a9d5"], [360, "#bbbbbb"],
];
const CX = 1290.5;
const CY = 387.7;
const wedge = (a0, a1, r) => {
  const pt = (a) => {
    const t = (a * Math.PI) / 180;
    return `${CX + r * Math.sin(t)} ${CY - r * Math.cos(t)}`;
  };
  return `M${CX} ${CY}L${pt(a0)}A${r} ${r} 0 0 1 ${pt(a1)}Z`;
};
const callouts = [
  [1417.6, 294, "(0%)", "1387.400,300.700 1396.500,292 1412,292"],
  [1417.4, 485, "(0%)", "1387,475 1396,483.500 1411.500,483.500"],
  [1169, 530, "0.13K (2.9%)", "1273.500,516.400 1272,529.300 1257,529.300"],
  [1151.300, 499.700, "(0%)", "1209,489 1201,498.200 1186,498.200"],
  [1119.300, 463.600, "(0%)", "1179.800,455.700 1169.500,462 1154,462"],
  [1117.300, 318, "(0%)", "1178.600,323 1167.500,316.400 1151.700,316.400"],
  [1137.900, 289.600, "(0%)", "1196.800,297 1187.700,288.600 1172.300,288.600"],
  [1164.800, 268, "(0%)", "1221.300,277 1214.600,266.800 1199.600,266.800"],
  [1197.200, 253.200, "(0%)", "1250.600,263.600 1247.400,252.900 1231.200,252.900"],
  [1226.900, 247.100, "(0%)", "1278.300,257.500 1277,245.400 1261.700,245.400"],
];
const Pie = () => (
  <svg width="454" height="528" viewBox="1046 122 454 528">
    {slices.map(([end, c], i) => (
      <path key={i} d={wedge(i ? slices[i - 1][0] : 0, end, 127)} fill={c} />
    ))}
    <path d={wedge(168.3, 206.2, 66.4)} fill="#e3592d" />
    {callouts.map(([x, y, t, line]) => (
      <g key={line}>
        <polyline points={line} fill="none" stroke="#a3a2a1" strokeWidth="1.400" />
        <text x={x} y={y + 5} fontSize="14.700" fill="#605e5c">{t}</text>
      </g>
    ))}
  </svg>
);

const tiles = [
  [845, 681, 1112, 869, "#a1caff", "Instruction"],
  [845, 870.5, 1112, 1012, "#989dd5", "Lobby"],
  [1113, 681, 1261, 813, "#f6bda9", "Corridor"],
  [1113, 777, 1261, 813, "#e3592d"],
  [1263, 681, 1359, 813, "#bd8fc3", "Lounge"],
  [1361, 681, 1415.5, 813, "#f2a9d5", "Con..."],
  [1113, 815, 1210, 885, "#c0afe2", "Stair"],
  [1113, 887, 1210, 951.5, "#ebd7a1", "Compute..."],
  [1113, 953.500, 1210, 1012, "#efadb3", "Cafeteria"],
  [1211.500, 815, 1303, 871, "#9ebec1", "Open Of..."],
  [1211.500, 872.500, 1303, 925, "#a5d8ac", "Library"],
  [1211.500, 927, 1303, 969.500, "#a9e4fb", "Administ..."],
  [1211.500, 971, 1303, 1012, "#aed1fa", "Media R..."],
  [1304.500, 815, 1353, 884, "#f8d3bd", "Ele..."],
  [1355.500, 815, 1385.500, 884, "#d8b2e4"],
  [1387.700, 815, 1415.500, 884, "#f2cfe6"],
  [1304.500, 886, 1340.500, 936, "#d2d5f3"],
  [1342, 886, 1378, 936, "#ebd7a1"],
  [1379.600, 886, 1415.500, 936, "#f8d3bd"],
  [1304.500, 938.500, 1348, 976, "#b1e8d2", "C..."],
  [1304.500, 978.700, 1348, 1012, "#b1e8d2", "Ve..."],
  [1349.600, 938.500, 1379.600, 981, "#a1c6e8"],
  [1381, 938.500, 1399.500, 981, "#a1c6e8"],
  [1401.500, 938.500, 1415.500, 981, "#f6bda9"],
  [1349.600, 983.500, 1391.500, 997, "#c4a0cc"],
  [1349.600, 999, 1391.500, 1012, "#f2a9d5"],
  [1393, 983.500, 1403.500, 1012, "#9fa5cb"],
  [1405, 983.500, 1415.500, 1012, "#bab9b8"],
];
const Treemap = () => (
  <svg width="600" height="334" viewBox="826 681 600 334">
    {tiles.map(([x, y, x2, y2, c, label], i) => (
      <g key={i}>
        <rect x={x} y={y} width={x2 - x} height={y2 - y} fill={c} />
        {label && <text x={x + 6} y={y + 22} fontSize="16.200" fill="#fff" letterSpacing="-0.15">{label}</text>}
      </g>
    ))}
  </svg>
);

const names = ["Admin", "Administration", "Advisors", "Caferteria", "Cafeteria", "Computer Lab", "Conference", "Copy/Print", "Corridor", "Drafting", "Dry Storage", "Electrical", "Instruction", "Library"];
const legend = [
  ["Instruction", "#1a82ee"], ["Lobby", "#212c85"], ["Corridor", "#e3592d"], ["Lounge", "#651c68"], ["Conference", "#bc4a92"],
  ["Stair", "#5c53b5"], ["Computer Lab", "#cea30e"], ["Cafeteria", "#bf4a36"], ["Open Office", "#196f5e"], ["Library", "#1b9134"],
  ["Administration", "#1dc3e8"], ["Media Review", "#1a82ee"], ["Electrical", "#f5915d"], ["Office", "#c06ea9"],
];
const handles = [
  [-4, 0, 8, 17], [-4, 0, 20, 5], [384, 0, 24, 5], [794, 0, 2, 17],
  [-4, 444, 9, 24], [788, 444, 9, 24],
  [-4, 896, 8, 19], [-4, 908, 20, 7], [384, 908, 24, 7], [789, 896, 8, 19], [777, 908, 20, 7],
];

const ReportCanvas = () => (
  <Report>
    <ModelVisual>
      <VisualHeader>
        <FunnelLines c="#6d6c6b" w={25} sw={2.2} />
        <Svg w={24} h={26} c="#6d6c6b">
          <path d="M9 2H6Q2 2 2 6V20Q2 24 6 24H18Q22 24 22 20V16M13 2H22V9M22 2L13 12M2 14H8Q12 14 12 18V24" />
        </Svg>
        <Dots w={22} r={2.2} c="#7a7978" />
      </VisualHeader>
      <BuildingModel />
      {handles.map(([x, y, w, h], i) => (
        <Handle key={i} $x={x} $y={y} $w={w} $h={h} />
      ))}
    </ModelVisual>
    <Charts>
      <ChartsTop>
        <Slicer>
          <SlicerTitle>name</SlicerTitle>
          <SlicerBody>
            <SlicerList>
              {names.map((n) => (
                <SlicerRow key={n}>
                  <Box />
                  {n}
                </SlicerRow>
              ))}
            </SlicerList>
            <SlicerScroll />
          </SlicerBody>
        </Slicer>
        <PieBlock>
          <ChartTitle $h={20} $pad={28}>Sum of area by name</ChartTitle>
          <Pie />
        </PieBlock>
        <Legend>
          <LegendTitle>name</LegendTitle>
          {legend.map(([n, c]) => (
            <LegendRow key={n}>
              <Dot $c={c} />
              {n}
            </LegendRow>
          ))}
          <MoreArrow />
        </Legend>
      </ChartsTop>
      <ChartTitle $h={31} $pad={18}>Sum of area by name</ChartTitle>
      <Treemap />
    </Charts>
  </Report>
);

/* ---------- panes ---------- */

const Empty = () => <FilterCard $empty>Add data fields here</FilterCard>;

const Filters = () => (
  <FiltersPane>
    <PaneHead $pad={27} $right={24}>
      <FunnelLines w={27} />
      <Spacer $w={19} />
      <PaneTitle>Filters</PaneTitle>
      <Spacer />
      <Svg w={22} h={18} sw={2.4} c="#4b4a49">
        <path d="M2 9Q4 2 11 2Q18 2 20 9" stroke="#7a7978" />
        <circle cx="11" cy="10.500" r="3.500" stroke="#252423" />
      </Svg>
      <Spacer $w={41} />
      <DoubleChevron />
    </PaneHead>
    <FilterSearch>
      <Svg w={24} h={24}>
        <circle cx="9.500" cy="9.500" r="7.500" />
        <path d="M15 15L22 22" />
      </Svg>
      Search
    </FilterSearch>
    <FilterScroll>
      <FilterList>
        <FilterGroup $top={29}>
          <GroupTitle $mb={2}>Filters on this visual<Dots w={14} r={1.500} /></GroupTitle>
          {["Area", "Commit Object ID", "Object ID", "Stream URL"].map((n) => (
            <FilterCard key={n}>
              <CardName>{n}</CardName>
              <CardRule>is (All)</CardRule>
            </FilterCard>
          ))}
          <Empty />
        </FilterGroup>
        <FilterGroup $top={50}>
          <GroupTitle $mb={1}>Filters on this page<Dots w={14} r={1.500} /></GroupTitle>
          <FilterCard $active>
            <CardName $bold>speckle_type</CardName>
            <CardRule>is Objects.BuiltElemen...</CardRule>
          </FilterCard>
          <Empty />
        </FilterGroup>
        <FilterGroup $top={50}>
          <GroupTitle $mb={1}>Filters on all pages<Dots w={14} r={1.500} /></GroupTitle>
          <Empty />
        </FilterGroup>
      </FilterList>
      <Thumb $h={1055} $top={16} $c="#cfcfcd" />
    </FilterScroll>
  </FiltersPane>
);

const FieldPill = ({ children }) => (
  <Pill>
    {children}
    <Spacer />
    <Chevron w={14} />
    <Cross />
  </Pill>
);

const Visualizations = () => (
  <VizPane>
    <PaneHead $pad={16} $right={20}>
      <PaneTitle $ls="0.016em">Visualizations</PaneTitle>
      <Spacer />
      <DoubleChevron />
    </PaneHead>
    <BuildLabel>Build visual</BuildLabel>
    <ModeRow>
      <ModeButton $on>
        <Svg w={48} h={50} c="#222">
          <path d="M1 3H38" strokeWidth="2.500" strokeLinecap="butt" />
          <g fill={GREEN} strokeWidth="3" strokeDasharray="4 2.500" strokeLinecap="butt">
            <rect x="1.500" y="13.500" width="45" height="13" />
            <rect x="1.500" y="35" width="45" height="13" />
          </g>
        </Svg>
      </ModeButton>
      <ModeButton>
        <Svg w={44} h={48} c="#222" sw={2.2}>
          <path d="M2 37V19H14M14 34V2H28V20M28 13H40M14 19V12" />
          <path d="M43 17Q37 18 24 33L29 38Q41 26 43 17ZM24 33Q17 33 15 38Q13 43 8 43Q14 47 22 46Q30 44 29 38" fill="#f0eef0" />
        </Svg>
      </ModeButton>
      <ModeButton>
        <Svg w={48} h={50} c="#222" sw={2.2}>
          <circle cx="20" cy="21" r="19" />
          <path d="M2 21L11 16L18 22L37 11M10 25V35M17 29V39M24 27V39M31 20V35" />
          <path d="M34 36L46 48" strokeWidth="5" />
        </Svg>
      </ModeButton>
    </ModeRow>
    <svg width="360" height="27" viewBox="0 0 360 27" fill="none" stroke="#807e7e" strokeWidth="2">
      <path d="M0 26H32L48 11L64 26H360" />
    </svg>
    <VizGrid>
      {gallery.map((art, i) => (
        <svg key={i} width="38" height="38" viewBox="-0.500 -0.500 38 38" fill="none" stroke={INK} strokeWidth="2">
          {art}
        </svg>
      ))}
      <GridDots>
        <Dots w={22} r={2} />
      </GridDots>
    </VizGrid>
    <DashLine />
    <CustomVisual>
      <svg width="40" height="40" viewBox="0 0 40 40">
        <rect width="40" height="40" fill="#dcdbdb" />
        <path d="M6 9L10 5L31 4L35 8V32L31 34L9 35L6 32Z" fill="#7fb9ea" />
        <path d="M5 10L9 11V35L5 31Z" fill="#5d53b5" />
        <path d="M9 11L32 9L33 31L11 34Z" fill="#1a82ee" />
      </svg>
    </CustomVisual>
    <FieldScroll>
      <Fields>
        <Well $mt={-14}><FieldPill>Commit Object ID</FieldPill></Well>
        <FieldLabel $h={64} $lh={75}>Object ID</FieldLabel>
        <Well><FieldPill>Object ID</FieldPill></Well>
        <FieldLabel $h={64} $lh={75}>Color By</FieldLabel>
        <Well $h={56} $empty>Add data fields here</Well>
        <FieldLabel $h={64} $lh={75}>Tooltip Data</FieldLabel>
        <Well><FieldPill>Area</FieldPill></Well>
        <FieldLabel $strong $h={60} $lh={74}>Drill through</FieldLabel>
        <SwitchRow $h={54}>Cross-report<Switch /></SwitchRow>
        <SwitchRow $h={51}>
          Keep all filters
          <Switch $on>
            <Svg w={20} h={16} c="#fff" sw={2.2}>
              <path d="M2 8L7 13L18 2" />
            </Svg>
          </Switch>
        </SwitchRow>
      </Fields>
      <Thumb $h={435} $top={149} $c="#c6c5c6" />
    </FieldScroll>
  </VizPane>
);

const fields = [
  ["area", true, "sum"], ["Commit Object ID", true], ["name", false, "hover"], ["Object ID", true],
  ["renderMaterial.n...", false, "tight"], ["speckle_type", false], ["Stream URL", true], ["URL Type", false],
];

const Data = () => (
  <DataPane>
    <PaneHead $pad={16} $right={0}>
      <PaneTitle>Data</PaneTitle>
      <Spacer />
      <DoubleChevron />
    </PaneHead>
    <DataSearch>
      <Svg w={30} h={30}>
        <circle cx="19" cy="10.500" r="8.800" />
        <path d="M12.500 17L2 28" />
      </Svg>
      Search
    </DataSearch>
    <TreeRow $root>
      <Chevron w={14} />
      <Spacer $w={11} />
      <Svg w={37} h={38} c="#222">
        <rect x="2" y="7" width="22" height="22" rx="4" />
        <path d="M9 7V29M17 7V29M2 13H24M2 22H24" />
        <circle cx="25" cy="29" r="11" fill={GREEN} stroke="none" />
        <path d="M20 29L23.500 32.500L30 26" stroke="#fff" strokeWidth="3" />
      </Svg>
      <FieldName>Query1</FieldName>
      <Spacer />
      <Dots w={18} />
    </TreeRow>
    {fields.map(([n, on, extra]) => (
      <TreeRow key={n} $hover={extra === "hover"}>
        <Check $on={on}>
          {on && (
            <Svg w={20} h={20} c="#fff" sw={1.6}>
              <path d="M4 10.500L8 14L17 5.500" />
            </Svg>
          )}
        </Check>
        <Glyph>
          {extra === "sum" && (
            <Svg w={20} h={22}>
              <path d="M19 1H1L10 11L1 21H19" />
            </Svg>
          )}
        </Glyph>
        <FieldName $tight={extra === "tight"}>{n}</FieldName>
        {extra === "hover" && (
          <>
            <Spacer />
            <Dots w={18} />
          </>
        )}
      </TreeRow>
    ))}
  </DataPane>
);

export default function App() {
  return (
    <>
      <Global />
      <Shell>
        <Toolbar>
          <Menu>
            <MenuItem $w={108}>File<Chevron w={13} /></MenuItem>
            <MenuItem $w={122}>View<Chevron w={13} /></MenuItem>
            <MenuItem $w={184}>Reading view</MenuItem>
            <MenuItem $w={190}>Mobile layout</MenuItem>
            <MenuItem $w={200} $muted>Open data model</MenuItem>
          </Menu>
          <ToolIcons />
        </Toolbar>
        <Body>
          <Left>
            <Stage>
              <CanvasArea>
                <ReportCanvas />
              </CanvasArea>
              <Filters />
            </Stage>
            <PageBar>
              <PageArrows>
                <Svg w={10} h={18} c="#c0bfbf" sw={1.6}><path d="M9 1.500V16.500L1.500 9Z" /></Svg>
                <Svg w={10} h={18} c="#c0bfbf" sw={1.6}><path d="M1 1.500V16.500L8.500 9Z" /></Svg>
              </PageArrows>
              <PageTab>Page 1</PageTab>
              <AddPage>
                <svg width="22" height="22" viewBox="0 0 22 22"><path d="M11 0V22M0 11H22" stroke="#fff" strokeWidth="6" /></svg>
              </AddPage>
            </PageBar>
          </Left>
          <Visualizations />
          <Data />
        </Body>
        <StatusEdge />
        <Tooltip>Name<b>'Query1'[name]</b></Tooltip>
        <Pointer>
          <svg width="28" height="42" viewBox="0 0 28 42">
            <path d="M2 3V33L9 27L14 39L19 37L14 25H24Z" fill="#000" stroke="#fff" strokeWidth="2" />
          </svg>
        </Pointer>
      </Shell>
    </>
  );
}
